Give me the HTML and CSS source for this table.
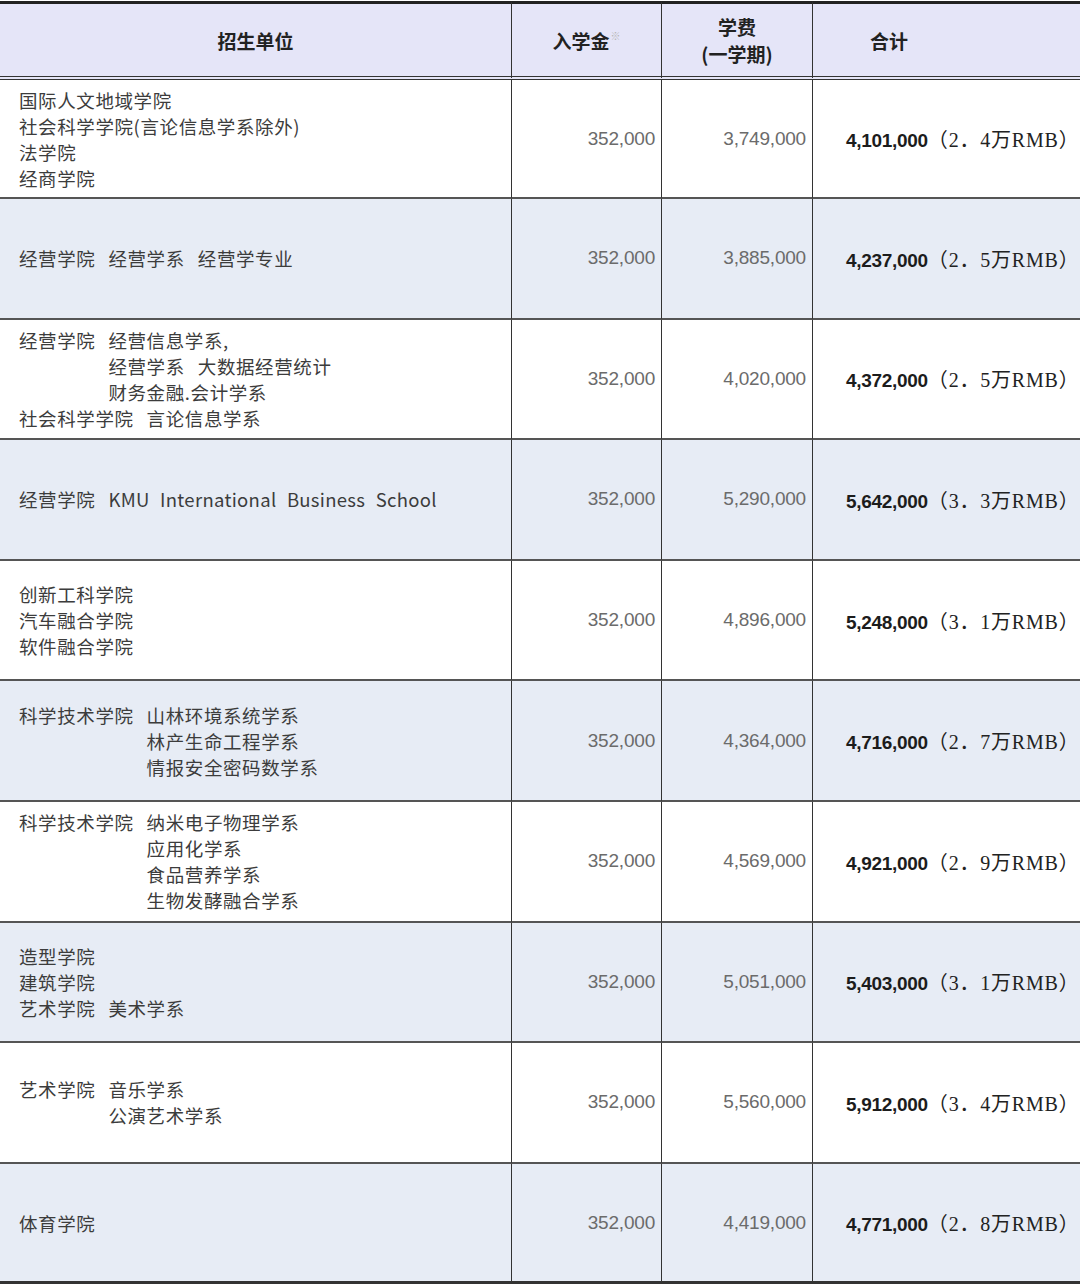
FILE: index.html
```html
<!DOCTYPE html>
<html lang="zh-CN">
<head>
<meta charset="utf-8">
<title>学费</title>
<link rel="stylesheet" href="styles.css">
</head>
<body>
<table class="fees">
  <colgroup>
    <col class="c-unit"><col class="c-adm"><col class="c-tui"><col class="c-sum">
  </colgroup>
  <thead>
    <tr class="head">
      <th class="h-unit">招生单位</th>
      <th class="h-adm">入学金<sup class="mark">※</sup></th>
      <th class="h-tui">学费<br>(一学期)</th>
      <th class="h-sum">合计</th>
    </tr>
  </thead>
  <tbody>
    <tr class="r1">
      <td class="unit">
        <div>国际人文地域学院</div>
        <div>社会科学学院(言论信息学系除外)</div>
        <div>法学院</div>
        <div>经商学院</div>
      </td>
      <td class="num">352,000</td>
      <td class="num">3,749,000</td>
      <td class="sum"><span class="tot">4,101,000</span><span class="rmb">（2．4万RMB）</span></td>
    </tr>
    <tr class="alt">
      <td class="unit"><div><span class="seg">经营学院</span><span class="seg">经营学系</span><span class="seg">经营学专业</span></div></td>
      <td class="num">352,000</td>
      <td class="num">3,885,000</td>
      <td class="sum"><span class="tot">4,237,000</span><span class="rmb">（2．5万RMB）</span></td>
    </tr>
    <tr>
      <td class="unit">
        <div class="nest"><div class="lead">经营学院</div><div class="subs"><div>经营信息学系,</div><div><span class="seg">经营学系</span><span class="seg">大数据经营统计</span></div><div>财务金融.会计学系</div></div></div>
        <div><span class="seg">社会科学学院</span><span class="seg">言论信息学系</span></div>
      </td>
      <td class="num">352,000</td>
      <td class="num">4,020,000</td>
      <td class="sum"><span class="tot">4,372,000</span><span class="rmb">（2．5万RMB）</span></td>
    </tr>
    <tr class="alt">
      <td class="unit"><div><span class="seg">经营学院</span><span class="latin">KMU International Business School</span></div></td>
      <td class="num">352,000</td>
      <td class="num">5,290,000</td>
      <td class="sum"><span class="tot">5,642,000</span><span class="rmb">（3．3万RMB）</span></td>
    </tr>
    <tr>
      <td class="unit">
        <div>创新工科学院</div>
        <div>汽车融合学院</div>
        <div>软件融合学院</div>
      </td>
      <td class="num">352,000</td>
      <td class="num">4,896,000</td>
      <td class="sum"><span class="tot">5,248,000</span><span class="rmb">（3．1万RMB）</span></td>
    </tr>
    <tr class="alt">
      <td class="unit">
        <div class="nest"><div class="lead">科学技术学院</div><div class="subs"><div>山林环境系统学系</div><div>林产生命工程学系</div><div>情报安全密码数学系</div></div></div>
      </td>
      <td class="num">352,000</td>
      <td class="num">4,364,000</td>
      <td class="sum"><span class="tot">4,716,000</span><span class="rmb">（2．7万RMB）</span></td>
    </tr>
    <tr>
      <td class="unit">
        <div class="nest"><div class="lead">科学技术学院</div><div class="subs"><div>纳米电子物理学系</div><div>应用化学系</div><div>食品营养学系</div><div>生物发酵融合学系</div></div></div>
      </td>
      <td class="num">352,000</td>
      <td class="num">4,569,000</td>
      <td class="sum"><span class="tot">4,921,000</span><span class="rmb">（2．9万RMB）</span></td>
    </tr>
    <tr class="alt">
      <td class="unit">
        <div>造型学院</div>
        <div>建筑学院</div>
        <div><span class="seg">艺术学院</span><span class="seg">美术学系</span></div>
      </td>
      <td class="num">352,000</td>
      <td class="num">5,051,000</td>
      <td class="sum"><span class="tot">5,403,000</span><span class="rmb">（3．1万RMB）</span></td>
    </tr>
    <tr>
      <td class="unit">
        <div class="nest"><div class="lead">艺术学院</div><div class="subs"><div>音乐学系</div><div>公演艺术学系</div></div></div>
      </td>
      <td class="num">352,000</td>
      <td class="num">5,560,000</td>
      <td class="sum"><span class="tot">5,912,000</span><span class="rmb">（3．4万RMB）</span></td>
    </tr>
    <tr class="alt last">
      <td class="unit"><div>体育学院</div></td>
      <td class="num">352,000</td>
      <td class="num">4,419,000</td>
      <td class="sum"><span class="tot">4,771,000</span><span class="rmb">（2．8万RMB）</span></td>
    </tr>
  </tbody>
</table>
</body>
</html>
```

FILE: styles.css
```css
html, body {
  margin: 0;
  padding: 0;
  background: #ffffff;
}

body {
  font-family: "Noto Sans CJK SC", "Noto Sans", sans-serif;
  color: #3a3a3a;
}

.fees {
  width: 1080px;
  table-layout: fixed;
  border-collapse: separate;
  border-spacing: 0;
  margin-top: 1px;
}

.c-unit { width: 512px; }
.c-adm { width: 150px; }
.c-tui { width: 151px; }
.c-sum { width: 267px; }

.fees th,
.fees td {
  box-sizing: border-box;
  padding: 0;
  vertical-align: middle;
  border-right: 1px solid #333;
  border-bottom: 2px solid #555;
}

.fees th:last-child,
.fees td:last-child {
  border-right: none;
}

.head th {
  background: #e5e5f8;
  height: 79px;
  border-top: 3px solid #222;
  border-bottom: 4px double #333;
  font-size: 19px;
  font-weight: 700;
  line-height: 27px;
  color: #222;
  text-align: center;
}

.h-sum {
  text-align: left !important;
  padding-left: 57px !important;
}

.mark {
  font-size: 10px;
  font-weight: 400;
  color: #b5b5b5;
  vertical-align: 9px;
  line-height: 0;
  margin-left: 1px;
}

.fees tbody tr {
  height: 120.6px;
}

.fees tbody tr.r1 {
  height: 119px;
}

.fees tr.alt td {
  background: #e7ecf5;
}

.fees tr.last td {
  border-bottom: 3px solid #333;
}

.unit {
  padding-left: 19px !important;
  font-size: 18.5px;
  line-height: 26px;
  color: #3c3c3c;
  text-align: left;
  letter-spacing: 0.6px;
}

.seg {
  margin-right: 13px;
}

.nest {
  display: flex;
  gap: 13px;
}

.latin {
  word-spacing: 6px;
  letter-spacing: 0.3px;
}

.num {
  text-align: right;
  padding-right: 6px !important;
  font-family: "Liberation Sans", Arial, sans-serif;
  font-size: 19px;
  color: #6b6b6b;
  letter-spacing: -0.2px;
}

.sum {
  padding-left: 33px !important;
  white-space: nowrap;
  color: #1c1c1c;
}

.tot {
  font-family: "Liberation Sans", Arial, sans-serif;
  font-weight: 700;
  font-size: 19px;
  letter-spacing: -0.3px;
}

.rmb {
  font-family: "Liberation Serif", "Noto Sans CJK SC", serif;
  font-size: 20px;
  color: #222;
  letter-spacing: 0.8px;
}
```
